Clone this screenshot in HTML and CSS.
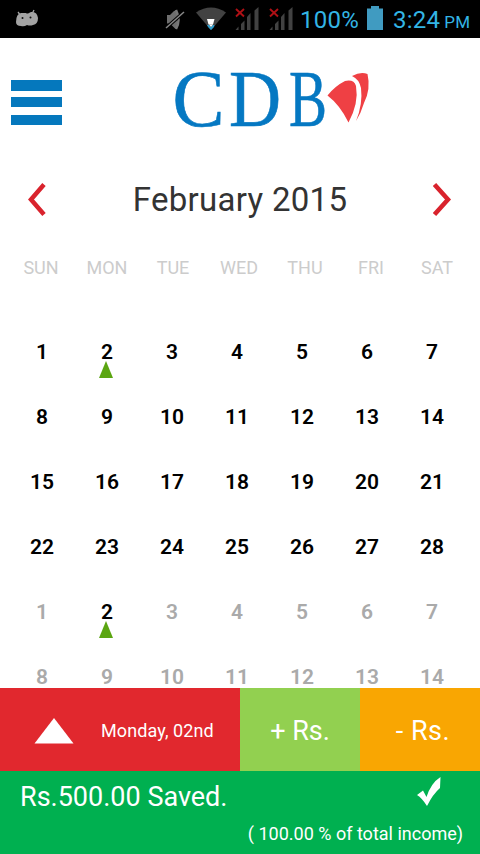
FILE: index.html
```
<!DOCTYPE html>
<html lang="en">
<head>
  <meta charset="UTF-8" />
  <meta name="viewport" content="width=device-width, initial-scale=1.0"/>
  <title>CDB Savings Calendar</title>
  <link rel="stylesheet" href="styles.css">
</head>
<body>

  <div class="status-bar">
    <svg class="status-icons" width="300" height="38" viewBox="0 0 300 38">
      <!-- android -->
      <path d="M16 22q0-8 5-9l5 0q1 1 3 0l2-1q6-1 7 6 0 6-5 7-3 1-6 0-3 2-6 1-5 0-5-4z" fill="#a3a3a3"/>
      <path d="M20.500 15.500l-2.500-3.500M32 14l2-4" stroke="#a3a3a3" stroke-width="1.300"/>
      <circle cx="22.500" cy="18" r="1" fill="#111"/>
      <circle cx="30.500" cy="17.500" r="1" fill="#111"/>
      <!-- muted -->
      <path d="M167 15h3l4-4 3-1v18l-2 .500-5-5h-3z" fill="#6e6e6e"/>
      <path d="M176 10q5 10 0 19" stroke="#777" stroke-width="2.500" fill="none"/>
      <path d="M166 28L184 12" stroke="#000" stroke-width="3.500"/>
      <path d="M166 28L184 12" stroke="#888" stroke-width="1.500"/>
      <!-- wifi -->
      <path d="M196 12.500q15-10 30 0L211 30z" fill="#424242"/>
      <path d="M207 19h7.500l-1.500 5.500h-4.500z" fill="#fff"/>
      <path d="M207 25h2l2 2 2-2h1.500l-.500 2-3 3-3-3z" fill="#2e9ccb"/>
      <path d="M209 24.500h4l-2 2.500z" fill="#fff"/>
      <!-- signal -->
      <g id="signal">
        <path d="M235.500 30l3-3.500v3.500zM241 24l3.500-3.500v9.500h-3.500zM247 17l3.500-4v17h-3.500zM254.500 10.500l4-3.500v23h-4z" fill="#424242"/>
        <path d="M236 9l8 7.500M244 9l-8 7.500" stroke="#b01015" stroke-width="1.900"/>
      </g>
      <use href="#signal" x="34"/>
    </svg>
    <span class="battery-level">100%</span>
    <svg class="battery" width="16" height="24" viewBox="0 0 16 24">
      <path d="M0 2.500h4V0h8v2.500h4V24H0z" fill="#409bc1"/>
    </svg>
    <span class="clock">3:24 <small>PM</small></span>
  </div>

  <header class="header">
    <button class="menu-button" aria-label="Menu"><i></i><i></i><i></i></button>
    <svg class="logo" width="200" height="100" viewBox="0 -15 200 100" aria-label="CDB">
      <g class="logo-text">
        <text x="0.500" y="60.500" textLength="52" lengthAdjust="spacingAndGlyphs">C</text>
        <text x="57" y="60.500" textLength="52" lengthAdjust="spacingAndGlyphs">D</text>
        <text x="117" y="60.500" textLength="38" lengthAdjust="spacingAndGlyphs">B</text>
      </g>
      <path d="M155.500 30.500Q163 21 173 16Q182 14 184 21Q187 38 176.500 57.500Q168 40 155.500 30.500z" fill="#ef4044"/>
      <path d="M180 11Q189 6 195.500 9Q199 24 192 38Q189 48 184 56Q191 39 189 23Q187 14 180 11z" fill="#ef4044"/>
    </svg>
  </header>

  <div class="month-nav">
    <svg class="arrow" width="20" height="36" viewBox="0 0 20 36"><path d="M17 2.500L4 17.500L17 32.500" /></svg>
    <h1>February 2015</h1>
    <svg class="arrow" width="20" height="36" viewBox="0 0 20 36"><path d="M1.500 2.500L15 17.500L1.500 32.500" /></svg>
  </div>

  <div class="weekdays">
    <span>SUN</span><span>MON</span><span>TUE</span><span>WED</span><span>THU</span><span>FRI</span><span>SAT</span>
  </div>

  <main class="days">
    <span>1</span><span class="marked">2</span><span>3</span><span>4</span><span>5</span><span>6</span><span>7</span>
    <span>8</span><span>9</span><span>10</span><span>11</span><span>12</span><span>13</span><span>14</span>
    <span>15</span><span>16</span><span>17</span><span>18</span><span>19</span><span>20</span><span>21</span>
    <span>22</span><span>23</span><span>24</span><span>25</span><span>26</span><span>27</span><span>28</span>
    <span class="next">1</span><span class="marked">2</span><span class="next">3</span><span class="next">4</span><span class="next">5</span><span class="next">6</span><span class="next">7</span>
    <span class="next">8</span><span class="next">9</span><span class="next">10</span><span class="next">11</span><span class="next">12</span><span class="next">13</span><span class="next">14</span>
  </main>

  <div class="actions">
    <div class="selected-day">
      <svg width="40" height="26" viewBox="0 0 40 26"><path d="M20 0L39.500 25.500H.500z" fill="#fff"/></svg>
      <span>Monday, 02nd</span>
    </div>
    <button class="income">+ Rs.</button>
    <button class="expense">- Rs.</button>
  </div>

  <footer class="summary">
    <div class="saved">
      <span>Rs.500.00 Saved.</span>
      <svg width="26" height="31" viewBox="0 0 26 31"><path d="M1 19L7 14.500L10.500 21Q15 7 24.500 1L24 12Q17 18 11 30Q6 22 1 19z" fill="#fff"/></svg>
    </div>
    <p class="share">( 100.00 % of total income)</p>
  </footer>

</body>
</html>
```
FILE: styles.css
```
* {
  box-sizing: border-box;
}

body {
  margin: 0;
  width: 480px;
  height: 854px;
  display: flex;
  flex-direction: column;
  overflow: hidden;
  background-color: #fff;
  font-family: Roboto, sans-serif;
}

button {
  border: none;
  padding: 0;
  font-family: inherit;
}

.status-bar {
  display: flex;
  height: 38px;
  background-color: #000;
  color: #33b5e5;
  line-height: 40px;
}

.status-icons {
  flex: none;
}

.battery-level {
  width: 67px;
  font-size: 24px;
  letter-spacing: 0.3px;
}

.battery {
  margin-top: 6px;
}

.clock {
  margin-left: 10px;
  font-size: 24px;
  letter-spacing: 0.2px;
  white-space: nowrap;
}

.clock small {
  margin-left: -2px;
  font-size: 17px;
}

.header {
  display: flex;
  height: 122px;
  padding: 27px 0 0 11px;
}

.menu-button {
  width: 51px;
  height: 45px;
  margin-top: 15px;
  display: flex;
  flex-direction: column;
  justify-content: space-between;
  background: none;
}

.menu-button i {
  width: 51px;
  height: 10px;
  background-color: #0578bd;
}

.menu-button i:first-child {
  height: 11px;
  margin-bottom: -2px;
}

.logo {
  margin: -15px 0 0 110px;
}

.logo-text {
  fill: #0578c2;
  stroke: #0578c2;
  stroke-width: 0.6;
  font-family: "Liberation Serif", serif;
  font-size: 80px;
}

.month-nav {
  display: flex;
  align-items: center;
  justify-content: space-between;
  height: 80px;
  padding: 0 27px;
}

.month-nav h1 {
  margin: -2px 0 0;
  color: #333;
  font-size: 33px;
  font-weight: 400;
  letter-spacing: 0.3px;
}

.arrow path {
  fill: none;
  stroke: #d9232d;
  stroke-width: 4.5;
}

.weekdays {
  display: grid;
  grid-template-columns: repeat(7, 66px);
  height: 79px;
  padding: 17px 0 0 8px;
  color: #ccc;
  font-size: 18px;
  line-height: 22px;
  text-align: center;
}

.days {
  flex: 1;
  min-height: 0;
  display: grid;
  grid-template-columns: repeat(7, 65px);
  grid-auto-rows: 65px;
  padding-left: 9.5px;
  overflow: hidden;
  font-size: 21px;
  font-weight: 600;
  letter-spacing: 0;
  line-height: 66px;
  text-align: center;
}

.next {
  color: #aaa;
}

.marked {
  position: relative;
}

.marked::after {
  content: "";
  position: absolute;
  left: 24.5px;
  top: 42px;
  border: solid transparent;
  border-width: 0 7.5px 17px;
  border-bottom-color: #5ba511;
}

.actions {
  display: grid;
  grid-template-columns: 2fr 1fr 1fr;
  height: 83px;
  color: #fff;
}

.selected-day {
  display: flex;
  align-items: center;
  gap: 27px;
  padding: 2px 0 0 34px;
  background-color: #e1282e;
  font-size: 18px;
  letter-spacing: 0.1px;
}

.income,
.expense {
  padding-top: 2px;
  color: #fff;
  font-size: 27px;
}

.income {
  background-color: #92d050;
}

.expense {
  padding-left: 6px;
  background-color: #f9a602;
  letter-spacing: 0.5px;
}

.summary {
  height: 83px;
  background-color: #00b050;
  color: #fff;
}

.saved {
  display: flex;
  justify-content: space-between;
  height: 52px;
  padding: 5px 38px 0 20px;
  font-size: 27px;
  line-height: 42px;
}

.share {
  margin: 0;
  padding-right: 17px;
  font-size: 18px;
  line-height: 22px;
  text-align: right;
}
```
